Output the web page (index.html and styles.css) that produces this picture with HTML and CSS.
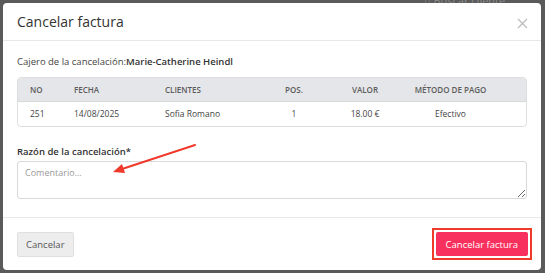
FILE: index.html
```html
<!DOCTYPE html>
<html lang="es">
<head>
    <meta charset="UTF-8">
    <meta name="viewport" content="width=device-width, initial-scale=1.0">
    <title>Cancelar factura</title>
    <link rel="stylesheet" href="styles.css">
</head>
<body>
    <div class="backdrop">
        <span class="behind">&#9675; Buscar cliente</span>
        <div class="modal">
            <div class="modal-header">
                <h2>Cancelar factura</h2>
                <svg class="close" width="11" height="11" viewBox="0 0 11 11">
                    <path d="M1 1 L10 10 M10 1 L1 10" stroke="#bcbcbc" stroke-width="1.3" fill="none"/>
                </svg>
            </div>

            <div class="modal-body">
                <p class="cashier">Cajero de la cancelación:<b>Marie-Catherine Heindl</b></p>

                <div class="table-wrap">
                    <table>
                        <thead>
                            <tr>
                                <th class="c-no">No</th>
                                <th class="c-date">Fecha</th>
                                <th class="c-client">Clientes</th>
                                <th class="c-pos">Pos.</th>
                                <th class="c-val">Valor</th>
                                <th class="c-pay">Método de pago</th>
                            </tr>
                        </thead>
                        <tbody>
                            <tr>
                                <td class="c-no">251</td>
                                <td class="c-date">14/08/2025</td>
                                <td class="c-client">Sofia Romano</td>
                                <td class="c-pos">1</td>
                                <td class="c-val">18.00 €</td>
                                <td class="c-pay">Efectivo</td>
                            </tr>
                        </tbody>
                    </table>
                </div>

                <label class="reason" for="reason">Razón de la cancelación*</label>
                <div class="field">
                    <textarea id="reason" placeholder="Comentario..."></textarea>
                    <!-- annotation arrow -->
                    <svg class="arrow" width="92" height="36" viewBox="0 0 92 36">
                        <line x1="86" y1="4" x2="13" y2="28" stroke="#f0392a" stroke-width="2" stroke-linecap="round"/>
                        <polygon points="4,31 16,32 13,23" fill="#f0392a"/>
                    </svg>
                </div>
            </div>

            <div class="modal-footer">
                <button class="btn btn-light">Cancelar</button>
                <span class="highlight">
                    <button class="btn btn-danger">Cancelar factura</button>
                </span>
            </div>
        </div>
    </div>
</body>
</html>
```

FILE: styles.css
```css
/* page */
* {
    box-sizing: border-box;
}

body {
    margin: 0;
    font-family: "Open Sans", Arial, sans-serif;
    color: #333;
    background-color: #5a5a5a;
}

.backdrop {
    position: relative;
    width: 545px;
    height: 273px;
    padding: 3px 4px 3px 3px;
    background-color: #5a5a5a;
    overflow: hidden;
}

.behind {
    position: absolute;
    top: -7px;
    left: 424px;
    font-size: 11px;
    color: #8a8a8a;
}

/* modal */
.modal {
    position: relative;
    height: 267px;
    background-color: white;
    border-radius: 4px;
    display: flex;
    flex-direction: column;
}

.modal-header {
    height: 38px;
    padding: 0 13px 0 14px;
    display: flex;
    align-items: center;
    justify-content: space-between;
    border-bottom: 1px solid #e8e8e8;
    flex-shrink: 0;
}

.modal-header h2 {
    margin: 0;
    font-size: 14px;
    font-weight: 400;
    color: #333;
}

.close {
    display: block;
    margin-top: 4px;
}

.modal-body {
    flex: 1;
    padding: 14px 14px 0;
    border-bottom: 1px solid #e8e8e8;
}

.cashier {
    margin: 0 0 9px;
    font-size: 9.5px;
    line-height: 13px;
    color: #444;
}

.cashier b {
    font-weight: 600;
    color: #333;
}

/* table */
.table-wrap {
    border: 1px solid #dedede;
    border-radius: 4px;
    overflow: hidden;
}

table {
    width: 100%;
    border-collapse: collapse;
    font-size: 8.5px;
    color: #444;
}

th {
    height: 23px;
    background-color: #e5e6e9;
    font-size: 8px;
    font-weight: 600;
    text-transform: uppercase;
    color: #5c5c5c;
    border-bottom: 1px solid #d8d8d8;
}

td {
    height: 25px;
}

th, td {
    padding: 0;
    text-align: left;
}

.c-no { width: 56px; padding-left: 12px; }
.c-date { width: 91px; }
.c-client { width: 94px; }
.c-pos { width: 70px; text-align: center; }
.c-val { width: 72px; text-align: center; }
.c-pay { text-align: center; padding-right: 26px; }

/* reason */
.reason {
    display: block;
    margin-top: 18px;
    font-size: 9.5px;
    font-weight: 600;
    line-height: 13px;
    color: #333;
}

.field {
    position: relative;
    margin-top: 3px;
}

textarea {
    display: block;
    width: 100%;
    height: 38px;
    padding: 5px 7px;
    border: 1px solid #d9d9d9;
    border-radius: 3px;
    font-family: "Open Sans", Arial, sans-serif;
    font-size: 9px;
    line-height: 12px;
    color: #333;
    resize: vertical;
}

textarea::placeholder {
    color: #9a9a9a;
}

.arrow {
    position: absolute;
    left: 92px;
    top: -20px;
}

/* footer */
.modal-footer {
    flex-shrink: 0;
    height: 52px;
    padding: 0 9px 0 14px;
    display: flex;
    align-items: center;
    justify-content: space-between;
}

.btn {
    height: 24px;
    padding: 0 10px;
    border: none;
    border-radius: 2px;
    font-family: "Open Sans", Arial, sans-serif;
    font-size: 9.5px;
    white-space: nowrap;
    cursor: pointer;
}

.btn-light {
    height: 25px;
    padding: 0 8px;
    background-color: #ededed;
    border: 1px solid #e0e0e0;
    color: #555;
}

.btn-danger {
    display: block;
    min-width: 92px;
    background-color: #f8305d;
    color: white;
}

.highlight {
    display: block;
    padding: 2px;
    border: 2px solid #f03a2a;
    background-color: white;
}
```
